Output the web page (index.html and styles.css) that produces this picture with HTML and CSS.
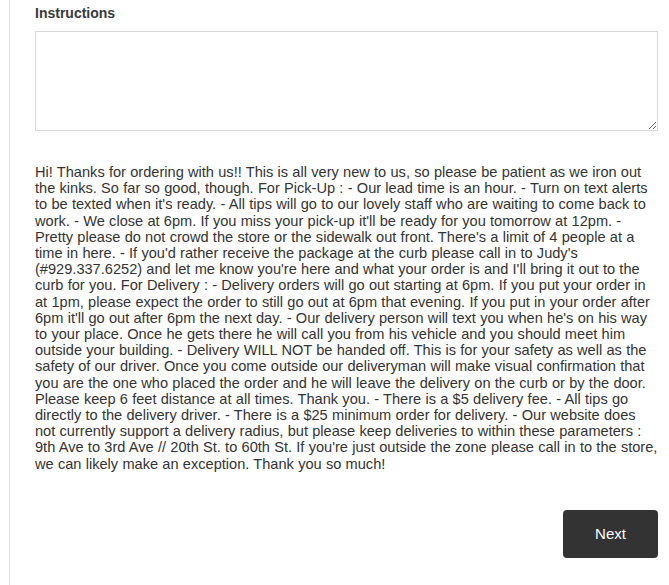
FILE: index.html
```html
<!DOCTYPE html>
<html>
<head>
    <title>Instructions</title>
    <link rel="stylesheet" href="styles.css">
</head>
<body>
    <div class="panel">
        <form id="instructions-form">
            <label for="instructions" class="field-label">Instructions</label>
            <textarea id="instructions" class="field-input"></textarea>
            <p class="notes">Hi! Thanks for ordering with us!! This is all very new to us, so please be patient as we iron out the kinks. So far so good, though. For Pick-Up : - Our lead time is an hour. - Turn on text alerts to be texted when it's ready. - All tips will go to our lovely staff who are waiting to come back to work. - We close at 6pm. If you miss your pick-up it'll be ready for you tomorrow at 12pm. - Pretty please do not crowd the store or the sidewalk out front. There's a limit of 4 people at a time in here. - If you'd rather receive the package at the curb please call in to Judy's (#929.337.6252) and let me know you're here and what your order is and I'll bring it out to the curb for you. For Delivery : - Delivery orders will go out starting at 6pm. If you put your order in at 1pm, please expect the order to still go out at 6pm that evening. If you put in your order after 6pm it'll go out after 6pm the next day. - Our delivery person will text you when he's on his way to your place. Once he gets there he will call you from his vehicle and you should meet him outside your building. - Delivery WILL NOT be handed off. This is for your safety as well as the safety of our driver. Once you come outside our deliveryman will make visual confirmation that you are the one who placed the order and he will leave the delivery on the curb or by the door. Please keep 6 feet distance at all times. Thank you. - There is a $5 delivery fee. - All tips go directly to the delivery driver. - There is a $25 minimum order for delivery. - Our website does not currently support a delivery radius, but please keep deliveries to within these parameters : 9th Ave to 3rd Ave // 20th St. to 60th St. If you're just outside the zone please call in to the store, we can likely make an exception. Thank you so much!</p>
            <div class="actions">
                <button type="submit" class="next-btn">Next</button>
            </div>
        </form>
    </div>
</body>
</html>
```

FILE: styles.css
```css
body {
    margin: 0;
    font-family: 'Liberation Sans', Arial, sans-serif;
    color: #333;
    background: #fff;
}

.panel {
    margin-left: 9px;
    border-left: 1px solid #ddd;
    padding: 3px 11px 11px 25px;
    min-height: 571px;
}

.field-label {
    display: block;
    font-size: 14px;
    font-weight: bold;
    line-height: 20px;
    color: #373a3c;
    margin-bottom: 8px;
}

.field-input {
    display: block;
    width: 100%;
    height: 100px;
    box-sizing: border-box;
    border: 1px solid #d8d8d8;
    border-radius: 0;
    padding: 8px;
    font: inherit;
    resize: vertical;
}

.notes {
    margin: 33px 0 0;
    font-size: 14.6px;
    line-height: 16.2px;
    word-spacing: 0.2px;
    color: #333;
}

.actions {
    display: flex;
    justify-content: flex-end;
    margin-top: 38px;
}

.next-btn {
    width: 95px;
    height: 48px;
    border: none;
    border-radius: 4px;
    background: #333;
    color: #fff;
    font: inherit;
    font-size: 15px;
    cursor: pointer;
}
```
